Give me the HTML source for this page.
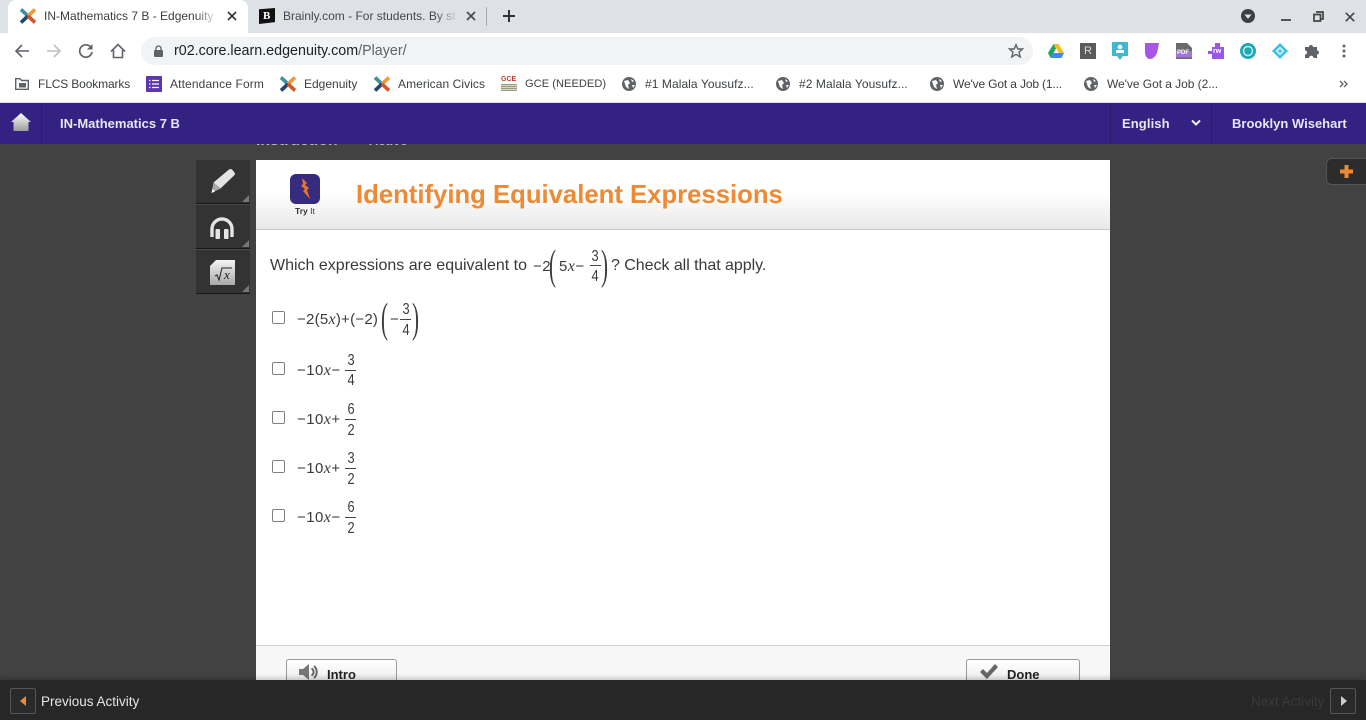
<!DOCTYPE html>
<html lang="en"><head><meta charset="utf-8"><title>IN-Mathematics 7 B - Edgenuity</title>
<style>
html,body{margin:0;padding:0;width:1366px;height:720px;overflow:hidden;background:#424242;font-family:"Liberation Sans",sans-serif}
.a,.t,.m,svg.i{position:absolute}
.t{white-space:nowrap;line-height:16px}
.c{font-size:12px;color:#3c4043}
.m{white-space:nowrap;font-size:15px;line-height:18px;color:#3c3c3c;letter-spacing:.45px}
.m i{font-family:"Liberation Serif",serif;font-size:16px}
.n{position:absolute;width:12px;text-align:center;font-size:16px;line-height:16px;color:#3c3c3c;transform:scaleX(.8)}
.b{position:absolute;width:11px;height:1px;background:#444}
.cb{position:absolute;left:272px;width:11px;height:11px;border:1px solid #808080;border-radius:2px;background:#fff}
.p{position:absolute;font-family:"Liberation Serif",serif;font-weight:400;color:#3c3c3c;line-height:42px;font-size:42px;transform-origin:0 0}
</style></head><body>

<!-- tab strip -->
<div class="a" style="left:0;top:0;width:1366px;height:33px;background:#dee1e6"></div>
<div class="a" style="left:8px;top:0;width:240px;height:33px;background:#fff;border-radius:8px 8px 0 0"></div>
<svg class="i" style="left:19px;top:8px" width="18" height="16" viewBox="0 0 18 16"><path d="M2 1.500L9 8" stroke="#3f8f9c" stroke-width="3.600"/><path d="M16 1.500L9 8" stroke="#ee9a3c" stroke-width="3.600"/><path d="M2 14.500L9 8" stroke="#23466b" stroke-width="3.600"/><path d="M16 14.500L9 8" stroke="#d9542b" stroke-width="3.600"/></svg>
<div class="t c" style="left:44px;top:8px;width:172px;overflow:hidden">IN-Mathematics 7 B - Edgenuity</div>
<div class="a" style="left:196px;top:8px;width:22px;height:16px;background:linear-gradient(90deg,rgba(255,255,255,0),#fff)"></div>
<svg class="i" style="left:227px;top:11px" width="10" height="10"><path d="M1 1L9 9M9 1L1 9" stroke="#333" stroke-width="1.600"/></svg>
<div class="a" style="left:259px;top:8px;width:16px;height:16px;background:#111;clip-path:polygon(0 8%,100% 0,100% 88%,0 100%)"></div>
<div class="t" style="left:263px;top:9px;font-size:11px;font-weight:700;color:#fff;font-family:'Liberation Serif',serif;line-height:14px">B</div>
<div class="t c" style="left:283px;top:8px;width:174px;overflow:hidden;color:#45494e">Brainly.com - For students. By st</div>
<div class="a" style="left:436px;top:8px;width:22px;height:16px;background:linear-gradient(90deg,rgba(222,225,230,0),#dee1e6)"></div>
<svg class="i" style="left:466px;top:11px" width="10" height="10"><path d="M1 1L9 9M9 1L1 9" stroke="#45494e" stroke-width="1.600"/></svg>
<div class="a" style="left:486px;top:7px;width:1px;height:19px;background:#a8abb0"></div>
<svg class="i" style="left:502px;top:9px" width="14" height="14"><path d="M7 1V13M1 7H13" stroke="#333" stroke-width="2"/></svg>
<svg class="i" style="left:1241px;top:9px" width="14" height="14"><circle cx="7" cy="7" r="7" fill="#3c4043"/><path d="M3.500 5.500H10.500L7 10Z" fill="#dee1e6"/></svg>
<div class="a" style="left:1281px;top:19px;width:10px;height:2px;background:#555"></div>
<svg class="i" style="left:1313px;top:11px" width="11" height="11"><path d="M3 1H10V8H8M1 3.500H7.500V10H1Z" stroke="#444" stroke-width="1.700" fill="none"/></svg>
<svg class="i" style="left:1345px;top:12px" width="10" height="10"><path d="M.8.8L9.2 9.2M9.2.8L.8 9.2" stroke="#444" stroke-width="1.600"/></svg>

<!-- toolbar -->
<div class="a" style="left:0;top:33px;width:1366px;height:36px;background:#fff"></div>
<svg class="i" style="left:14px;top:43px" width="16" height="16"><path d="M15 8H2M8 2L2 8L8 14" stroke="#5f6368" stroke-width="1.600" fill="none"/></svg>
<svg class="i" style="left:46px;top:43px" width="16" height="16"><path d="M1 8H14M8 2L14 8L8 14" stroke="#bdc1c6" stroke-width="1.600" fill="none"/></svg>
<svg class="i" style="left:78px;top:43px" width="16" height="16"><path d="M13 4.500A6.200 6.200 0 1 0 14 9" stroke="#5f6368" stroke-width="1.700" fill="none"/><path d="M14.500 1V6.500H9Z" fill="#5f6368"/></svg>
<svg class="i" style="left:110px;top:43px" width="16" height="16"><path d="M1 8.500L8 1.500L15 8.500M3.500 7V14.500H12.500V7" stroke="#5f6368" stroke-width="1.600" fill="none"/></svg>
<div class="a" style="left:141px;top:37px;width:892px;height:28px;border-radius:14px;background:#f1f3f4"></div>
<svg class="i" style="left:154px;top:45px" width="9" height="12"><path d="M2 5V3.500A2.500 2.500 0 0 1 7 3.500V5" stroke="#5f6368" fill="none" stroke-width="1.300"/><rect y="5" width="9" height="7" rx="1" fill="#5f6368"/></svg>
<div class="t" style="left:174px;top:43px;font-size:14.300px;color:#202124">r02.core.learn.edgenuity.com<span style="color:#5f6368">/Player/</span></div>
<svg class="i" style="left:1008px;top:43px" width="16" height="16" viewBox="0 0 16 16"><path d="M8 1.800L9.900 6H14.500L11 9L12.200 14L8 11.300L3.800 14L5 9L1.500 6H6.100Z" fill="none" stroke="#5f6368" stroke-width="1.400"/></svg>
<svg class="i" style="left:1048px;top:44px" width="16" height="14" viewBox="0 0 16 14"><path d="M5.500 0H10.500L16 9H11Z" fill="#f6bb1f"/><path d="M5.500 0L0 9L2.600 14L8 4.500Z" fill="#1ea362"/><path d="M2.600 14H13.500L16 9H5.200Z" fill="#4285f4"/></svg>
<div class="a" style="left:1080px;top:43px;width:16px;height:16px;background:#5b5b5b"></div>
<div class="t" style="left:1084px;top:43px;font-size:11px;color:#ddd">R</div>
<svg class="i" style="left:1112px;top:42px" width="16" height="18"><rect width="16" height="14" fill="#3eb8d0"/><path d="M5 14H11L8 18Z" fill="#3eb8d0"/><circle cx="8" cy="5" r="2.300" fill="#fff"/><rect x="4" y="8" width="8" height="3" fill="#fff"/></svg>
<svg class="i" style="left:1144px;top:42px" width="16" height="18"><path d="M1 1H15L13.500 9C12.500 14 9 17 6 17C3 17 1 14 1 10Z" fill="#a855e8"/></svg>
<svg class="i" style="left:1176px;top:43px" width="16" height="16"><path d="M0 0H11L16 5V16H0Z" fill="#6a6a6a"/><rect y="8" width="16" height="6.500" fill="#a274d8"/></svg>
<div class="t" style="left:1177px;top:50px;font-size:6px;line-height:7px;font-weight:700;color:#fff">PDF</div>
<svg class="i" style="left:1208px;top:43px" width="16" height="16"><path d="M4 4H7V0H12V4H16V16H4V11H0V8H4Z" fill="#9a56e4"/></svg>
<div class="t" style="left:1213px;top:47px;font-size:7px;line-height:9px;font-weight:700;color:#fff">rw</div>
<svg class="i" style="left:1240px;top:43px" width="16" height="16"><circle cx="8" cy="8" r="8" fill="#1ea7b8"/><circle cx="8" cy="8" r="4.500" fill="none" stroke="#bfeef2" stroke-width="1.500"/></svg>
<svg class="i" style="left:1272px;top:43px" width="16" height="16"><path d="M8 0L16 8L8 16L0 8Z" fill="#3cc0e8"/><path d="M8 3.500L12.500 8L8 12.500L3.500 8Z" fill="#c8f0fb"/><path d="M8 6L10 8L8 10L6 8Z" fill="#3cc0e8"/></svg>
<svg class="i" style="left:1304px;top:43px" width="16" height="16"><path d="M1 4H5A2 2 0 0 1 9 4H13V7.500A2 2 0 0 1 13 11.500V15H9.500A2 2 0 0 0 5 15H1V11.500A2 2 0 0 0 1 7.500Z" fill="#5f6368"/></svg>
<svg class="i" style="left:1342px;top:44px" width="4" height="14"><circle cx="2" cy="2" r="1.500" fill="#5f6368"/><circle cx="2" cy="7" r="1.500" fill="#5f6368"/><circle cx="2" cy="12" r="1.500" fill="#5f6368"/></svg>

<!-- bookmarks -->
<div class="a" style="left:0;top:69px;width:1366px;height:33px;background:#fff"></div>
<div class="a" style="left:0;top:102px;width:1366px;height:1px;background:#dcdcf0"></div>
<svg class="i" style="left:15px;top:78px" width="14" height="12"><path d="M.7 2.500V11.300H13.300V2.500H6.500L5 .7H.7Z" fill="#fff" stroke="#5f6368" stroke-width="1.400"/><rect x="4" y="5" width="7" height="4.500" fill="#5f6368"/></svg>
<div class="t c" style="left:38px;top:76px;letter-spacing:-.14px">FLCS Bookmarks</div>
<svg class="i" style="left:146px;top:76px" width="16" height="16"><rect width="16" height="16" rx="1" fill="#5e35b1"/><path d="M3 4.500H4.500M6 4.500H13M3 8H4.500M6 8H13M3 11.500H4.500M6 11.500H13" stroke="#fff" stroke-width="1.300"/></svg>
<div class="t c" style="left:170px;top:76px;letter-spacing:.13px">Attendance Form</div>
<svg class="i" style="left:279px;top:76px" width="18" height="16" viewBox="0 0 18 16"><path d="M2 1.500L9 8" stroke="#3f8f9c" stroke-width="3.600"/><path d="M16 1.500L9 8" stroke="#ee9a3c" stroke-width="3.600"/><path d="M2 14.500L9 8" stroke="#23466b" stroke-width="3.600"/><path d="M16 14.500L9 8" stroke="#d9542b" stroke-width="3.600"/></svg>
<div class="t c" style="left:304px;top:76px">Edgenuity</div>
<svg class="i" style="left:373px;top:76px" width="18" height="16" viewBox="0 0 18 16"><path d="M2 1.500L9 8" stroke="#3f8f9c" stroke-width="3.600"/><path d="M16 1.500L9 8" stroke="#ee9a3c" stroke-width="3.600"/><path d="M2 14.500L9 8" stroke="#23466b" stroke-width="3.600"/><path d="M16 14.500L9 8" stroke="#d9542b" stroke-width="3.600"/></svg>
<div class="t c" style="left:398px;top:76px;letter-spacing:.07px">American Civics</div>
<div class="t" style="left:501px;top:76px;font-size:7px;line-height:7px;font-weight:700;color:#c0392b">GCE</div>
<div class="a" style="left:501px;top:84px;width:16px;height:7px;background:repeating-linear-gradient(#9a9a7a 0 1px,#d8d8c8 1px 2px)"></div>
<div class="t" style="left:525px;top:76px;letter-spacing:.03px;color:#3c4043;font-size:11.100px">GCE (NEEDED)</div>
<svg class="i" style="left:622px;top:77px" width="14" height="14" viewBox="0 0 14 14"><circle cx="7" cy="7" r="7" fill="#5f6368"/><path d="M2 4L6 3L8 6L6 8L7 12L4 10ZM9 2L12 4L10 5ZM10 8L13 8L11 11Z" fill="#fff"/></svg>
<div class="t c" style="left:645px;top:76px;letter-spacing:.07px">#1 Malala Yousufz...</div>
<svg class="i" style="left:776px;top:77px" width="14" height="14" viewBox="0 0 14 14"><circle cx="7" cy="7" r="7" fill="#5f6368"/><path d="M2 4L6 3L8 6L6 8L7 12L4 10ZM9 2L12 4L10 5ZM10 8L13 8L11 11Z" fill="#fff"/></svg>
<div class="t c" style="left:799px;top:76px;letter-spacing:.07px">#2 Malala Yousufz...</div>
<svg class="i" style="left:930px;top:77px" width="14" height="14" viewBox="0 0 14 14"><circle cx="7" cy="7" r="7" fill="#5f6368"/><path d="M2 4L6 3L8 6L6 8L7 12L4 10ZM9 2L12 4L10 5ZM10 8L13 8L11 11Z" fill="#fff"/></svg>
<div class="t c" style="left:953px;top:76px;letter-spacing:-.15px">We've Got a Job (1...</div>
<svg class="i" style="left:1084px;top:77px" width="14" height="14" viewBox="0 0 14 14"><circle cx="7" cy="7" r="7" fill="#5f6368"/><path d="M2 4L6 3L8 6L6 8L7 12L4 10ZM9 2L12 4L10 5ZM10 8L13 8L11 11Z" fill="#fff"/></svg>
<div class="t c" style="left:1107px;top:76px;letter-spacing:-.05px">We've Got a Job (2...</div>
<svg class="i" style="left:1339px;top:80px" width="9" height="8"><path d="M1 1L4 4L1 7M5 1L8 4L5 7" stroke="#5f6368" stroke-width="1.300" fill="none"/></svg>

<!-- background content peeking -->
<div class="t" style="left:256px;top:133px;font-size:15.800px;font-weight:700;color:#bdbdbd">Instruction</div>
<div class="t" style="left:369px;top:133px;font-size:12.800px;font-weight:700;color:#bdbdbd">Active</div>

<!-- site nav -->
<div class="a" style="left:0;top:103px;width:1366px;height:41px;background:#332281"></div>
<div class="a" style="left:41px;top:103px;width:1px;height:41px;background:#2a1c6c"></div>
<div class="a" style="left:1110px;top:103px;width:1px;height:41px;background:#2a1c6c"></div>
<div class="a" style="left:1211px;top:103px;width:1px;height:41px;background:#2a1c6c"></div>
<svg class="i" style="left:11px;top:112px" width="20" height="20" viewBox="0 0 20 20"><defs><linearGradient id="h" x1="0" y1="0" x2="0" y2="1"><stop offset="0" stop-color="#fff"/><stop offset="1" stop-color="#9c9c9c"/></linearGradient></defs><path d="M10 1L20 10H17.500V19H2.500V10H0Z" fill="url(#h)"/></svg>
<div class="t" style="left:60px;top:115.500px;font-size:13px;font-weight:700;color:#e8e6f4">IN-Mathematics 7 B</div>
<div class="t" style="left:1122px;top:115.500px;font-size:13px;font-weight:700;color:#e8e6f4;letter-spacing:.1px">English</div>
<svg class="i" style="left:1191px;top:119px" width="10" height="8"><path d="M1 1.500L5 5.500L9 1.500" stroke="#eee" stroke-width="2" fill="none"/></svg>
<div class="t" style="left:1232px;top:115.500px;font-size:13px;font-weight:700;color:#e8e6f4">Brooklyn Wisehart</div>

<!-- side tools -->
<div class="a" style="left:196px;top:160px;width:54px;height:134px;background:#333"></div>
<div class="a" style="left:196px;top:203px;width:54px;height:2px;border-top:1px solid #161616;border-bottom:1px solid #4a4a4a;box-sizing:border-box"></div>
<div class="a" style="left:196px;top:248px;width:54px;height:2px;border-top:1px solid #161616;border-bottom:1px solid #4a4a4a;box-sizing:border-box"></div>
<div class="a" style="left:196px;top:293px;width:54px;height:1px;background:#161616"></div>
<svg class="i" style="left:210px;top:168px" width="26" height="26" viewBox="0 0 26 26"><path d="M19 1.500C20 .8 21 .8 22 1.500L24.500 4.500C25.200 5.500 25 6.500 24.300 7.300L10.500 20.500L3.500 14.500Z" fill="#e4e4e4"/><path d="M3.500 14.500L10.500 20.500L1.500 25Z" fill="#a8a8a8"/><path d="M2.500 21L1.500 25L5 23.500Z" fill="#fff"/></svg>
<svg class="i" style="left:209px;top:216px" width="26" height="24" viewBox="0 0 26 24"><path d="M3 21V13A10 10 0 0 1 23 13V21" fill="none" stroke="#e4e4e4" stroke-width="3.400"/><rect x="6.500" y="13" width="4.500" height="10" rx="1" fill="#e4e4e4"/><rect x="15" y="13" width="4.500" height="10" rx="1" fill="#e4e4e4"/></svg>
<div class="a" style="left:210px;top:260px;width:25px;height:25px;background:linear-gradient(#f4f4f4,#a8a8a8);clip-path:polygon(6px 0,100% 0,100% 100%,0 100%,0 6px)"></div>
<svg class="i" style="left:214px;top:267px" width="18" height="15"><path d="M1 9L3 8L5 13L8 1H18" fill="none" stroke="#222" stroke-width="1"/></svg>
<div class="t" style="left:224px;top:268px;font:italic 13px/14px 'Liberation Serif',serif;color:#222">x</div>
<svg class="i" style="left:242px;top:195px" width="7" height="7"><path d="M7 0V7H0Z" fill="#777"/></svg>
<svg class="i" style="left:242px;top:240px" width="7" height="7"><path d="M7 0V7H0Z" fill="#777"/></svg>
<svg class="i" style="left:242px;top:285px" width="7" height="7"><path d="M7 0V7H0Z" fill="#777"/></svg>

<!-- main panel -->
<div class="a" style="left:256px;top:160px;width:854px;height:520px;background:#fff"></div>
<div class="a" style="left:256px;top:160px;width:854px;height:70px;box-sizing:border-box;border-bottom:1px solid #c8c8c8;background:linear-gradient(#fff 0,#fff 45%,#e9e9e9 100%)"></div>
<div class="a" style="left:290px;top:174px;width:30px;height:30px;border-radius:6px;background:#352c7e"></div>
<svg class="i" style="left:299px;top:178px" width="12" height="24" viewBox="0 0 12 24"><path d="M3 0L8 5L6 7L10 10L8 12L11 21L4 13L6 11L2 8L4 6Z" fill="#e9742b"/></svg>
<div class="t" style="left:295px;top:204px;font-size:8.500px;line-height:14px;color:#333;font-weight:700">Try <span style="font-weight:400">It</span></div>
<div class="t" style="left:356px;top:178.500px;font-size:25.700px;line-height:32px;font-weight:700;color:#ed8a33">Identifying Equivalent Expressions</div>

<div class="t" style="left:270px;top:256px;font-size:16px;line-height:19px;color:#3a3a3a">Which expressions are equivalent to</div>
<div class="m" style="left:533px;top:258px">−2</div>
<div class="p" style="left:549px;top:245px;transform:scaleX(.5)">(</div>
<div class="m" style="left:559px;top:258px">5<i>x</i>−</div>
<div class="n" style="left:589px;top:249px">3</div><div class="b" style="left:590px;top:265px"></div><div class="n" style="left:589px;top:269px">4</div>
<div class="p" style="left:601px;top:245px;transform:scaleX(.5)">)</div>
<div class="t" style="left:611px;top:256px;font-size:16px;line-height:19px;color:#3a3a3a;letter-spacing:-.04px">? Check all that apply.</div>

<!-- options -->
<div class="cb" style="top:311px"></div>
<div class="m" style="left:297px;top:311px;letter-spacing:.25px">−2(5<i>x</i>)+(−2)</div>
<div class="p" style="left:381px;top:298px;transform:scaleX(.5)">(</div>
<div class="m" style="left:390px;top:311px">−</div>
<div class="n" style="left:400px;top:302px">3</div><div class="b" style="left:400px;top:319px"></div><div class="n" style="left:400px;top:323px">4</div>
<div class="p" style="left:412px;top:298px;transform:scaleX(.5)">)</div>

<div class="cb" style="top:362px"></div>
<div class="m" style="left:297px;top:362px">−10<i>x</i>−</div>
<div class="n" style="left:345px;top:353px">3</div><div class="b" style="left:345px;top:370px"></div><div class="n" style="left:345px;top:373px">4</div>

<div class="cb" style="top:411px"></div>
<div class="m" style="left:297px;top:411px">−10<i>x</i>+</div>
<div class="n" style="left:345px;top:402px">6</div><div class="b" style="left:345px;top:419px"></div><div class="n" style="left:345px;top:423px">2</div>

<div class="cb" style="top:460px"></div>
<div class="m" style="left:297px;top:460px">−10<i>x</i>+</div>
<div class="n" style="left:345px;top:451px">3</div><div class="b" style="left:345px;top:468px"></div><div class="n" style="left:345px;top:472px">2</div>

<div class="cb" style="top:509px"></div>
<div class="m" style="left:297px;top:509px">−10<i>x</i>−</div>
<div class="n" style="left:345px;top:500px">6</div><div class="b" style="left:345px;top:517px"></div><div class="n" style="left:345px;top:521px">2</div>

<!-- panel footer -->
<div class="a" style="left:256px;top:645px;width:854px;height:35px;border-top:1px solid #cfcfcf;box-sizing:border-box;background:#f7f7f7"></div>
<div class="a" style="left:286px;top:659px;width:111px;height:30px;box-sizing:border-box;border:1px solid #999;border-radius:3px;background:linear-gradient(#fff,#e8e8e8)"></div>
<svg class="i" style="left:298px;top:663px" width="22" height="18" viewBox="0 0 22 18"><path d="M1 6H5L11 1V17L5 12H1Z" fill="#777"/><path d="M13.500 5.500A4 4 0 0 1 13.500 12.500M16 3A8 8 0 0 1 16 15" stroke="#666" stroke-width="2" fill="none"/></svg>
<div class="t" style="left:327px;top:666.500px;font-size:13px;font-weight:700;color:#222">Intro</div>
<div class="a" style="left:966px;top:659px;width:114px;height:30px;box-sizing:border-box;border:1px solid #999;border-radius:3px;background:linear-gradient(#fff,#e8e8e8)"></div>
<svg class="i" style="left:979px;top:663px" width="20" height="17" viewBox="0 0 20 17"><path d="M1 9L4 6L8 10L16 1L19 4L8 16Z" fill="#666"/></svg>
<div class="t" style="left:1007px;top:666.500px;font-size:13px;font-weight:700;color:#222">Done</div>

<!-- floating plus -->
<div class="a" style="left:1326px;top:158px;width:50px;height:27px;box-sizing:border-box;border:1px solid #555;border-radius:6px;background:#2c2c2c"></div>
<svg class="i" style="left:1339px;top:164px" width="15" height="15"><path d="M7.500 1V14M1 7.500H14" stroke="#ed8a33" stroke-width="4"/></svg>

<!-- bottom bar -->
<div class="a" style="left:0;top:680px;width:1366px;height:40px;background:#272727;box-shadow:0 -2px 5px rgba(0,0,0,.2)"></div>
<div class="a" style="left:10px;top:688px;width:26px;height:26px;box-sizing:border-box;border:1px solid #555;border-radius:2px;background:#2a2a2a"></div>
<svg class="i" style="left:19px;top:696px" width="8" height="10"><path d="M7 0V10L1 5Z" fill="#ed8a33"/></svg>
<div class="t" style="left:41px;top:693.500px;font-size:13.500px;color:#e6e6e6">Previous Activity</div>
<div class="t" style="left:1251px;top:693.500px;font-size:13.500px;color:#3a3a3a">Next Activity</div>
<div class="a" style="left:1330px;top:688px;width:26px;height:26px;box-sizing:border-box;border:1px solid #555;border-radius:2px;background:#2a2a2a"></div>
<svg class="i" style="left:1340px;top:696px" width="8" height="10"><path d="M1 0V10L7 5Z" fill="#ccc"/></svg>
</body></html>
